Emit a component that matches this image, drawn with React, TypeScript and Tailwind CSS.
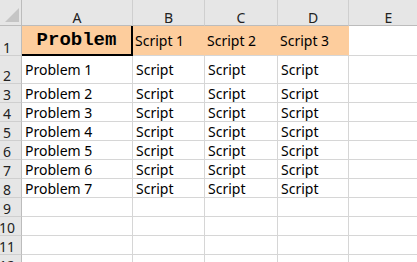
import React from 'react';

const cols = ['A', 'B', 'C', 'D', 'E'];
const font = { fontFamily: '"Noto Sans", "Liberation Sans", sans-serif' };

const rows: string[][] = [
  ['Problem 1', 'Script', 'Script', 'Script'],
  ['Problem 2', 'Script', 'Script', 'Script'],
  ['Problem 3', 'Script', 'Script', 'Script'],
  ['Problem 4', 'Script', 'Script', 'Script'],
  ['Problem 5', 'Script', 'Script', 'Script'],
  ['Problem 6', 'Script', 'Script', 'Script'],
  ['Problem 7', 'Script', 'Script', 'Script'],
  [],
  [],
  [],
  [],
];

const RowHead: React.FC<{ n: number; last?: boolean }> = ({ n, last }) => (
  <div
    className={`relative bg-[#e6e6e6] border-r border-r-[#bcbcbc] border-b border-b-[#cfcfcf] flex items-end justify-center pr-[7px] text-[14px] leading-[15px] text-[#222] overflow-hidden ${last ? 'border-r-[#1e7145]' : ''}`}
  >
    {n}
  </div>
);

const Cell: React.FC<{ text?: string }> = ({ text }) => (
  <div className="border-r border-b border-[#d6d6d6] flex items-center pl-[3px] text-[14px] leading-[19px] text-black whitespace-nowrap overflow-hidden">
    {text}
  </div>
);

export default function App() {
  return (
    <div className="w-[417px] h-[262px] overflow-hidden bg-white" style={font}>
      <div className="grid grid-cols-[22px_111px_72px_73px_71px_80px] grid-rows-[26px_30px_28px_repeat(10,19px)]">
        {/* corner */}
        <div className="relative bg-[#e6e6e6] border-r border-b border-[#bcbcbc]">
          <svg className="absolute left-0 top-0" width="21" height="25" viewBox="0 0 21 25">
            <polygon points="19,8 19,22 5,22" fill="#c5c5c5" />
          </svg>
        </div>
        {cols.map((c) => (
          <div
            key={c}
            className="bg-[#e6e6e6] border-r border-r-[#cfcfcf] border-b border-b-[#bcbcbc] flex items-end justify-center text-[14px] leading-[15px] text-[#222]"
          >
            {c}
          </div>
        ))}

        {/* row 1 */}
        <RowHead n={1} />
        <div
          className="bg-[#fdcd9d] border-r-2 border-b-2 border-black flex items-center justify-center text-[19px] font-bold text-black"
          style={{ fontFamily: '"Liberation Mono", "Courier New", monospace' }}
        >
          Problem
        </div>
        {['Script 1', 'Script 2', 'Script 3'].map((s) => (
          <div
            key={s}
            className="bg-[#fdcd9d] border-r border-r-[#fdcd9d] border-b border-b-[#d6d6d6] flex items-center pl-[2px] text-[14px] leading-[19px] text-black whitespace-nowrap"
          >
            {s}
          </div>
        ))}
        <Cell />

        {rows.map((r, i) => (
          <React.Fragment key={i}>
            <RowHead n={i + 2} last={i === 10} />
            <Cell text={r[0]} />
            <Cell text={r[1]} />
            <Cell text={r[2]} />
            <Cell text={r[3]} />
            <Cell />
          </React.Fragment>
        ))}
      </div>
    </div>
  );
}
